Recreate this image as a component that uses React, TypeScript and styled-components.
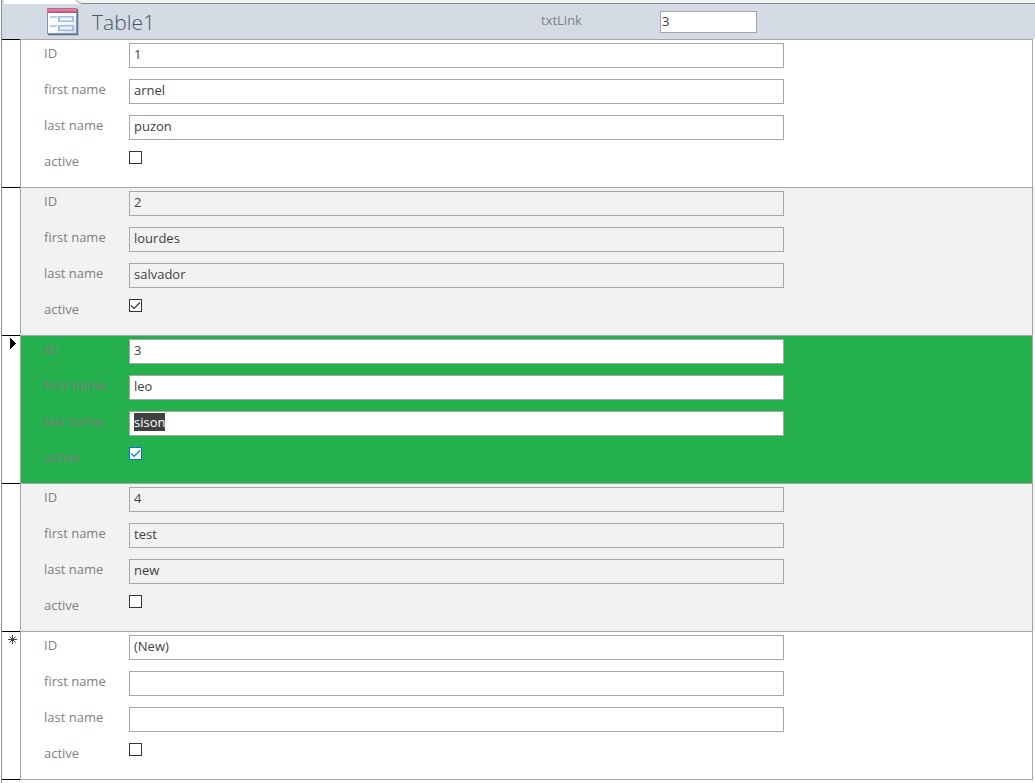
import React, { useEffect, useRef, useState } from "react";
import styled, { createGlobalStyle } from "styled-components";

const GlobalStyle = createGlobalStyle`
  *, *::before, *::after { box-sizing: border-box; }
  body {
    margin: 0;
    background: #ffffff;
    font-family: "Open Sans", "Noto Sans", sans-serif;
    font-size: 13px;
  }
`;

const Window = styled.div`
  min-height: 100vh;
  padding-left: 1px;
  background: #ffffff;
`;

const Frame = styled.div`
  min-height: 100vh;
  border-left: 1px solid #8a919b;
`;

const TabStrip = styled.div`
  display: flex;
  height: 4px;
  background: #f3f4f6;
`;

const ActiveTab = styled.svg`
  flex: none;
  display: block;
`;

const StripEdge = styled.div`
  flex: 1;
  border-bottom: 1px solid #868c95;
`;

const FormHeader = styled.header`
  display: flex;
  align-items: center;
  height: 35px;
  padding-left: 44px;
  background: #d5dbe5;
`;

const Title = styled.h1`
  flex: none;
  width: 462px;
  margin: 0;
  padding-left: 13px;
  color: #44546a;
  font-size: 21px;
  font-weight: 300;
  line-height: 32px;
`;

const LinkLabel = styled.label`
  flex: none;
  width: 119px;
  padding-bottom: 4px;
  color: #7f7f7f;
  line-height: 18px;
`;

const LinkInput = styled.input`
  width: 97px;
  height: 22px;
  padding: 0 1px 2px;
  border: 1px solid #a6a6a6;
  border-radius: 0;
  outline: none;
  background: #ffffff;
  color: #404040;
  font: inherit;
`;

const Record = styled.form<{ $outside: string }>`
  display: flex;
  padding-right: 2px;
  background: ${(p) => p.$outside};
`;

const Selector = styled.div`
  flex: none;
  width: 18px;
  padding: 2px 0 0 6px;
  border: 0 solid #000000;
  border-top-width: 1px;
  background: #ffffff;

  ${Record}:last-child & {
    border-bottom-width: 1px;
  }
`;

const Marker = styled.svg`
  display: block;
`;

const Detail = styled.div<{ $fill: string }>`
  flex: 1;
  padding: 3px 0 0 23px;
  border: 1px solid #a6a6a6;
  border-bottom-width: 0;
  background: ${(p) => p.$fill};

  ${Record}:last-child & {
    border-bottom-width: 1px;
  }
`;

const FieldRow = styled.div`
  display: flex;
  align-items: flex-start;
  height: 36px;
`;

const FieldLabel = styled.label`
  flex: none;
  width: 85px;
  padding-top: 1px;
  color: #7f7f7f;
  line-height: 18px;
`;

const FieldInput = styled.input<{ $fill: string }>`
  flex: 0 1 655px;
  min-width: 0;
  height: 25px;
  padding: 0 4px 3px;
  border: 1px solid #a6a6a6;
  border-radius: 0;
  outline: none;
  background: ${(p) => p.$fill};
  color: #404040;
  font: inherit;

  &::selection {
    background: #404040;
    color: #ffffff;
  }
`;

const CheckCell = styled.span`
  display: grid;

  & > * {
    grid-area: 1 / 1;
  }
`;

const CheckInput = styled.input<{ $edge: string }>`
  appearance: none;
  width: 13px;
  height: 13px;
  margin: 0;
  border: 1px solid ${(p) => p.$edge};
  background: #ffffff;
`;

const Tick = styled.svg`
  display: block;
  pointer-events: none;
`;

type Person = {
  id: string;
  first: string;
  last: string;
  active: boolean;
  isNew?: boolean;
};

const people: Person[] = [
  { id: "1", first: "arnel", last: "puzon", active: false },
  { id: "2", first: "lourdes", last: "salvador", active: true },
  { id: "3", first: "leo", last: "sison", active: true },
  { id: "4", first: "test", last: "new", active: false },
  { id: "(New)", first: "", last: "", active: false, isNew: true },
];

function FormIcon() {
  return (
    <svg width="33" height="29" viewBox="0 0 33 29" aria-hidden="true">
      <defs>
        <linearGradient id="sheet" x1="0" y1="0" x2="1" y2="1">
          <stop offset="0" stopColor="#ffffff" />
          <stop offset="0.6" stopColor="#f8fafd" />
          <stop offset="1" stopColor="#cbd9ec" />
        </linearGradient>
        <linearGradient id="bar" x1="0" y1="0" x2="0" y2="1">
          <stop offset="0" stopColor="#b84c77" />
          <stop offset="0.3" stopColor="#d98ca9" />
          <stop offset="1" stopColor="#c2466f" />
        </linearGradient>
      </defs>
      <rect x="2" y="2" width="31" height="27" fill="#8793a3" opacity="0.4" />
      <rect x="2" y="2" width="30" height="26" fill="#5f7188" />
      <rect x="1" y="1" width="30" height="26" fill="#8497b2" />
      <rect x="2" y="5" width="28" height="21" fill="url(#sheet)" />
      <rect x="1" y="1" width="30" height="5" fill="url(#bar)" />
      <path d="M4 10h7M4 19h7" stroke="#b6cde9" strokeWidth="2" />
      <path d="M12 9h16v6H12zM12 18h16v6H12z" fill="#a0bde4" />
      <path d="M14 10.500h12v3H14zM14 19.500h12v3H14z" fill="#eef3fb" />
    </svg>
  );
}

function RowMarker({ kind }: { kind: "current" | "new" }) {
  return (
    <Marker width="11" height="12" viewBox="0 0 11 12" aria-hidden="true">
      {kind === "current" ? (
        <path d="M2 0h1v1h1v1h1v1h1v1h1v1h1v1h-1v1h-1v1h-1v1h-1v1h-1v1h-1z" fill="#000000" />
      ) : (
        <path
          d="M4.5 1v9M0 5.5h9M1.5 2.5l6 6M7.500 2.500l-6 6"
          fill="none"
          stroke="#404040"
        />
      )}
    </Marker>
  );
}

type RecordProps = { person: Person; index: number; current: boolean; onEnter: () => void };

function PersonRecord({ person, index, current, onEnter }: RecordProps) {
  const [active, setActive] = useState(person.active);
  const lastName = useRef<HTMLInputElement>(null);
  const band = index % 2 ? "#f2f2f2" : "#ffffff";
  const fieldFill = current ? "#ffffff" : band;
  const key = `person-${index}`;

  useEffect(() => {
    if (person.id === "3") {
      lastName.current?.focus();
      lastName.current?.select();
    }
  }, [person.id]);

  return (
    <Record $outside={band} onFocus={onEnter} onSubmit={(e) => e.preventDefault()}>
      <Selector>
        {current && <RowMarker kind="current" />}
        {person.isNew && <RowMarker kind="new" />}
      </Selector>
      <Detail $fill={current ? "#24b14d" : band}>
        <FieldRow>
          <FieldLabel htmlFor={`${key}-id`}>ID</FieldLabel>
          <FieldInput id={`${key}-id`} $fill={fieldFill} defaultValue={person.id} readOnly />
        </FieldRow>
        <FieldRow>
          <FieldLabel htmlFor={`${key}-first`}>first name</FieldLabel>
          <FieldInput id={`${key}-first`} $fill={fieldFill} defaultValue={person.first} />
        </FieldRow>
        <FieldRow>
          <FieldLabel htmlFor={`${key}-last`}>last name</FieldLabel>
          <FieldInput
            id={`${key}-last`}
            ref={lastName}
            $fill={fieldFill}
            defaultValue={person.last}
            spellCheck={false}
          />
        </FieldRow>
        <FieldRow>
          <FieldLabel htmlFor={`${key}-active`}>active</FieldLabel>
          <CheckCell>
            <CheckInput
              id={`${key}-active`}
              type="checkbox"
              $edge={current ? "#0078d7" : "#333333"}
              checked={active}
              onChange={(e) => setActive(e.target.checked)}
            />
            {active && (
              <Tick width="13" height="13" viewBox="0 0 13 13" aria-hidden="true">
                <path
                  d="M2 6.500L5 9.500L11 3.500"
                  fill="none"
                  stroke={current ? "#0078d7" : "#333333"}
                  strokeWidth="1.2"
                />
              </Tick>
            )}
          </CheckCell>
        </FieldRow>
      </Detail>
    </Record>
  );
}

export default function App() {
  const [current, setCurrent] = useState(2);

  return (
    <>
      <GlobalStyle />
      <Window>
        <Frame>
          <TabStrip>
            <ActiveTab width="80" height="4" viewBox="0 0 80 4" aria-hidden="true">
              <path d="M0 0h74q1 3 6 4H0z" fill="#ffffff" />
              <path d="M0 0h2v4h-2z" fill="#d5dbe5" />
              <path d="M74 0q1 3 6 3.500" fill="none" stroke="#a39a92" />
            </ActiveTab>
            <StripEdge />
          </TabStrip>
          <FormHeader>
            <FormIcon />
            <Title>Table1</Title>
            <LinkLabel htmlFor="txt-link">txtLink</LinkLabel>
            <LinkInput id="txt-link" value={people[current].id} readOnly />
          </FormHeader>
          <main>
            {people.map((person, index) => (
              <PersonRecord
                key={person.id}
                person={person}
                index={index}
                current={index === current}
                onEnter={() => setCurrent(index)}
              />
            ))}
          </main>
        </Frame>
      </Window>
    </>
  );
}
